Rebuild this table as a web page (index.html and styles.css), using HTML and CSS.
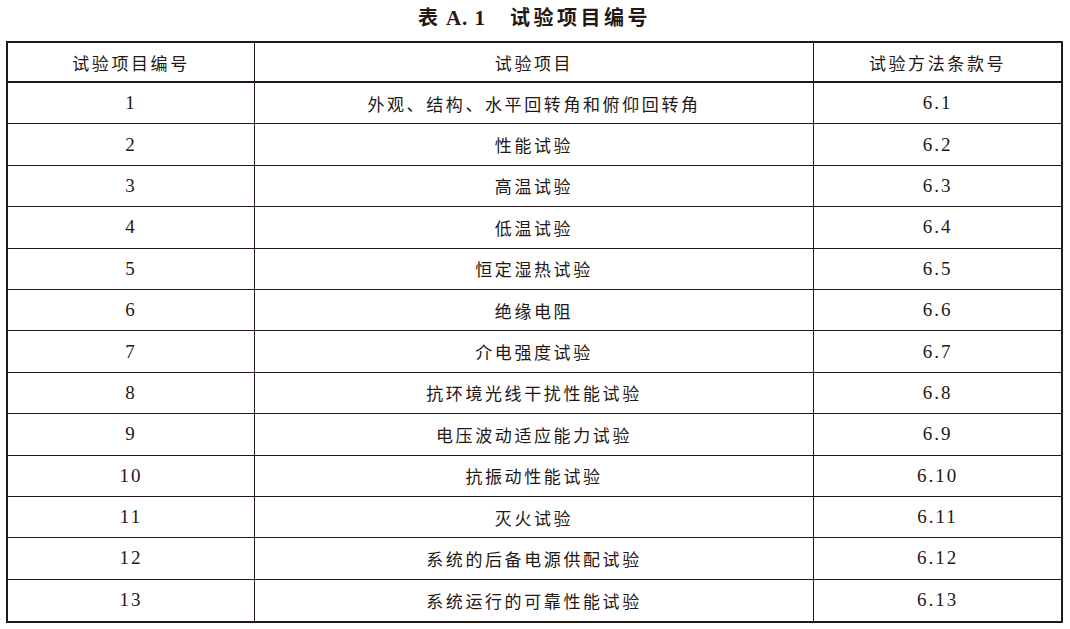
FILE: index.html
```html
<!DOCTYPE html>
<html lang="zh-CN">
<head>
<meta charset="utf-8">
<title>表 A.1 试验项目编号</title>
<link rel="stylesheet" href="styles.css">
</head>
<body>
<div class="page">
  <div class="caption"><span class="cap-cn">表</span> <span class="cap-num">A. 1</span><span class="cap-gap"></span><span class="cap-cn">试验项目编号</span></div>
  <table class="grid">
    <colgroup>
      <col class="c1"><col class="c2"><col class="c3">
    </colgroup>
    <thead>
      <tr><th>试验项目编号</th><th>试验项目</th><th class="last">试验方法条款号</th></tr>
    </thead>
    <tbody>
      <tr><td class="num">1</td><td>外观、结构、水平回转角和俯仰回转角</td><td class="num last">6.1</td></tr>
      <tr><td class="num">2</td><td>性能试验</td><td class="num last">6.2</td></tr>
      <tr><td class="num">3</td><td>高温试验</td><td class="num last">6.3</td></tr>
      <tr><td class="num">4</td><td>低温试验</td><td class="num last">6.4</td></tr>
      <tr><td class="num">5</td><td>恒定湿热试验</td><td class="num last">6.5</td></tr>
      <tr><td class="num">6</td><td>绝缘电阻</td><td class="num last">6.6</td></tr>
      <tr><td class="num">7</td><td>介电强度试验</td><td class="num last">6.7</td></tr>
      <tr><td class="num">8</td><td>抗环境光线干扰性能试验</td><td class="num last">6.8</td></tr>
      <tr><td class="num">9</td><td>电压波动适应能力试验</td><td class="num last">6.9</td></tr>
      <tr><td class="num">10</td><td>抗振动性能试验</td><td class="num last">6.10</td></tr>
      <tr><td class="num">11</td><td>灭火试验</td><td class="num last">6.11</td></tr>
      <tr><td class="num">12</td><td>系统的后备电源供配试验</td><td class="num last">6.12</td></tr>
      <tr class="end"><td class="num">13</td><td>系统运行的可靠性能试验</td><td class="num last">6.13</td></tr>
    </tbody>
  </table>
</div>
</body>
</html>
```
FILE: styles.css
```css
html, body {
  margin: 0;
  padding: 0;
  background: #ffffff;
}
body {
  color: #231815;
  font-family: "Noto Sans CJK SC", "Liberation Serif", serif;
}
.page {
  padding-left: 6px;
  width: 1057px;
}
.caption {
  height: 34px;
  line-height: 34px;
  margin-bottom: 7px;
  text-align: center;
  font-weight: bold;
  font-size: 20px;
  white-space: nowrap;
  padding-left: 0;
}
.cap-cn {
  font-family: "Noto Sans CJK SC", sans-serif;
  letter-spacing: 3.5px;
}
.cap-num {
  font-family: "Liberation Serif", serif;
  font-size: 21px;
  letter-spacing: 1px;
}
.cap-gap {
  display: inline-block;
  width: 24px;
}
.grid {
  width: 1057px;
  table-layout: fixed;
  border-collapse: separate;
  border-spacing: 0;
  border: 2px solid #231815;
}
.c1 { width: 247px; }
.c2 { width: 559px; }
.c3 { width: 247px; }
.grid th,
.grid td {
  padding: 0;
  text-align: center;
  vertical-align: middle;
  border-right: 1px solid #231815;
  border-bottom: 1px solid #231815;
  font-weight: normal;
  font-size: 17px;
  letter-spacing: 2.6px;
  font-family: "Noto Sans CJK SC", sans-serif;
  white-space: nowrap;
}
.grid thead tr { height: 40px; }
.grid thead th { border-bottom-width: 2px; }
.grid tbody tr { height: 41.4px; }
.grid .last { border-right: none; }
.grid tr.end td { border-bottom: none; }
.grid td.num {
  font-family: "Liberation Serif", serif;
  font-size: 19px;
  letter-spacing: 2px;
}
```
